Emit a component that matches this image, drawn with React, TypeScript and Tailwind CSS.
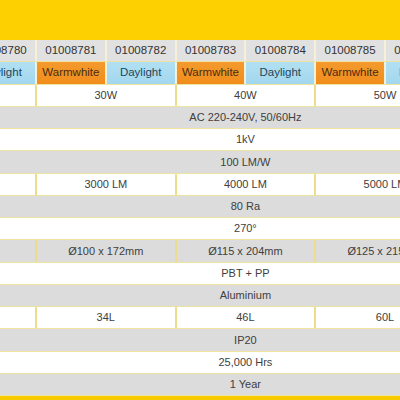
import React from "react";

const codes = ["", "", "01008780", "01008781", "01008782", "01008783", "01008784", "01008785", "01008786", "", "", ""];

type Row =
  | { kind: "full"; text: string; gray: boolean }
  | { kind: "pair"; values: string[]; gray: boolean };

const rows: Row[] = [
  { kind: "pair", values: ["", "30W", "40W", "50W", ""], gray: false },
  { kind: "full", text: "AC 220-240V, 50/60Hz", gray: true },
  { kind: "full", text: "1kV", gray: false },
  { kind: "full", text: "100 LM/W", gray: true },
  { kind: "pair", values: ["", "3000 LM", "4000 LM", "5000 LM", ""], gray: false },
  { kind: "full", text: "80 Ra", gray: true },
  { kind: "full", text: "270°", gray: false },
  { kind: "pair", values: ["", "Ø100 x 172mm", "Ø115 x 204mm", "Ø125 x 215mm", ""], gray: true },
  { kind: "full", text: "PBT + PP", gray: false },
  { kind: "full", text: "Aluminium", gray: true },
  { kind: "pair", values: ["", "34L", "46L", "60L", ""], gray: false },
  { kind: "full", text: "IP20", gray: true },
  { kind: "full", text: "25,000 Hrs", gray: false },
  { kind: "full", text: "1 Year", gray: true },
];

const cellH = "h-[21.25px]";

export default function App() {
  return (
    <div className="w-[400px] h-[400px] overflow-hidden bg-white flex flex-col font-['Liberation_Sans',Arial,sans-serif] text-[11px] text-[#404040]">
      <div className="h-[40px] shrink-0 bg-[#fdd002]" />
      <div className="ml-[-172.4px] w-[835.6px] shrink-0 flex flex-col gap-y-px bg-[#efe3a2] pb-px">
        <div className="grid grid-cols-[repeat(12,67.8px)] gap-x-[2px] bg-[#f6f0d8]">
          {codes.map((c, i) => (
            <div key={i} className={`${cellH} bg-[#e1e1e1] flex items-center justify-center text-[#333] text-[11.5px]`}>
              {c}
            </div>
          ))}
        </div>
        <div className="grid grid-cols-[repeat(12,67.8px)] gap-x-[2px] bg-[#f6f0d8]">
          {codes.map((c, i) =>
            i % 2 === 1 ? (
              <div key={i} className={`${cellH} bg-gradient-to-b from-[#f39a2c] to-[#f18d1c] flex items-center justify-center text-[#4a2c12] text-[11.5px]`}>
                {c ? "Warmwhite" : ""}
              </div>
            ) : (
              <div key={i} className={`${cellH} bg-gradient-to-b from-[#b2e0f2] to-[#a2d7ee] flex items-center justify-center text-[#24465a] text-[11.5px]`}>
                {c ? "Daylight" : ""}
              </div>
            )
          )}
        </div>
        {rows.map((r, idx) => {
          const bg = r.gray ? "bg-[#dcdcdc]" : "bg-white";
          if (r.kind === "full") {
            return (
              <div key={idx} className={`${cellH} ${bg} flex items-center justify-center`}>
                {r.text}
              </div>
            );
          }
          return (
            <div key={idx} className="grid grid-cols-[repeat(12,67.8px)] gap-x-[2px] bg-[#ecdc8c]">
              <div className={`${cellH} ${bg}`} />
              {r.values.map((v, j) => (
                <div key={j} className={`${cellH} ${bg} col-span-2 flex items-center justify-center`}>
                  {v}
                </div>
              ))}
              <div className={`${cellH} ${bg}`} />
            </div>
          );
        })}
      </div>
      <div className="flex-1 bg-[#f8cb00]" />
    </div>
  );
}
